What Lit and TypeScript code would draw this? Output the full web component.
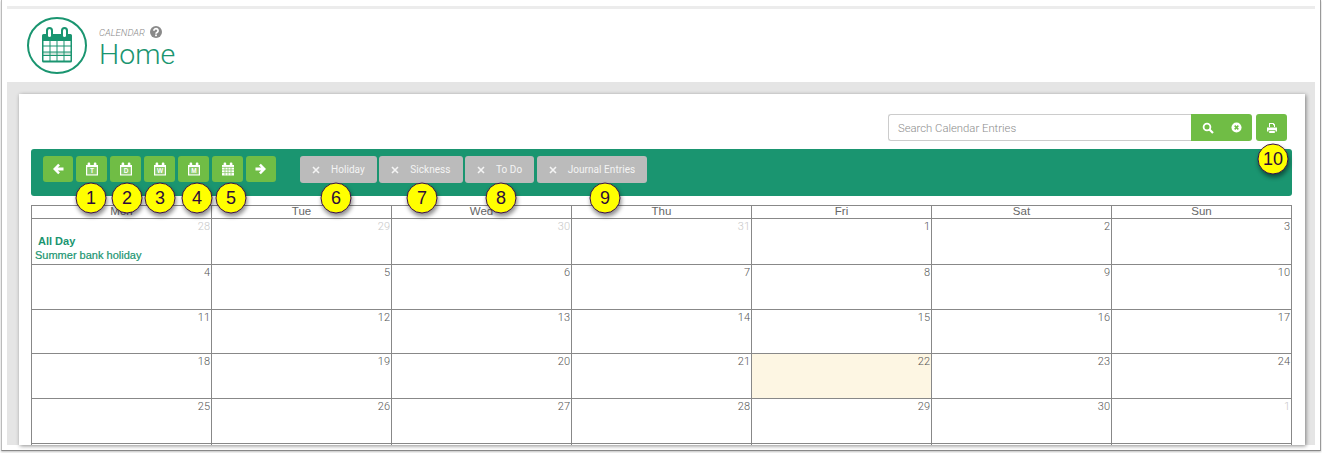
import { LitElement, html, css, svg } from "lit"
import { customElement } from "lit/decorators.js"

type Cell = { n: number; muted?: boolean; today?: boolean; events?: boolean }

const DAYS = ["Mon", "Tue", "Wed", "Thu", "Fri", "Sat", "Sun"]

const CELLS: Cell[] = [
  { n: 28, muted: true, events: true },
  { n: 29, muted: true },
  { n: 30, muted: true },
  { n: 31, muted: true },
  ...Array.from({ length: 30 }, (_, i) => ({ n: i + 1, today: i + 1 === 22 })),
  { n: 1, muted: true },
]

const CALLOUTS = [
  { label: "1", x: 91, y: 198 },
  { label: "2", x: 127, y: 198 },
  { label: "3", x: 160, y: 198 },
  { label: "4", x: 197, y: 198 },
  { label: "5", x: 231, y: 198 },
  { label: "6", x: 336, y: 198 },
  { label: "7", x: 422, y: 198 },
  { label: "8", x: 501, y: 198 },
  { label: "9", x: 605, y: 198 },
  { label: "10", x: 1273, y: 159 },
]

const FILTERS = ["Holiday", "Sickness", "To Do", "Journal Entries"]

// logo calendar cells: 4 columns, 4 rows, third row is tinted
const LOGO_ROWS = [
  { y: 24, h: 4.5, fill: "#fff" },
  { y: 29.5, h: 5, fill: "#fff" },
  { y: 35.5, h: 2.5, fill: "#cfe3da" },
  { y: 39, h: 4.5, fill: "#fff" },
]
const LOGO_COLS = [16.5, 23.5, 30.5, 37.5]

// small calendar glyph used on the toolbar buttons
const calIcon = (letter: string) => html`
  <svg class="cal" viewBox="0 0 14 14" width="14" height="14">
    <path
      fill="#fff"
      d="M1 3h1.6V1.6a1 1 0 0 1 1-1h.6a1 1 0 0 1 1 1V3h3.6V1.6a1 1 0 0 1 1-1h.6a1 1 0 0 1 1 1V3H13v10.5H1z"
    />
    ${letter
      ? svg`<rect x="2.2" y="5" width="9.6" height="7.4" fill="#8bc96a" />
          <text x="7" y="11.2" text-anchor="middle" font-size="6.5" font-weight="700" font-family="Liberation Sans, sans-serif" fill="#fff">${letter}</text>`
      : svg`<path stroke="#8bc96a" stroke-width=".8" d="M1 5.4h12M1 7.900h12M1 10.600h12M4 5v8.500M7 5v8.500M10 5v8.500" />`}
  </svg>
`

const arrow = (flip: boolean) => html`
  <svg class=${flip ? "flip" : ""} viewBox="0 0 12 12" width="12" height="12">
    <path fill="#fff" d="M6.200.8 8 2.600 5.800 4.600H11.500V7.400H5.800L8 9.400 6.200 11.200 1 6z" />
  </svg>
`

@customElement("app-root")
export class AppRoot extends LitElement {
  static styles = css`
    :host {
      display: block;
      width: 1322px;
      height: 453px;
      overflow: hidden;
      position: relative;
      background: #fff;
      font-family: "Liberation Sans", Arial, sans-serif;
    }

    .frame {
      box-sizing: border-box;
      width: 1320px;
      height: 451px;
      margin-left: 1px;
      border-left: 1px solid #bbb;
      border-right: 1px solid #999;
      border-bottom: 1px solid #888;
      box-shadow: 0 1px 2px rgba(0, 0, 0, 0.25);
      padding: 6px 5px 5px 5px;
      display: flex;
      flex-direction: column;
      overflow: hidden;
    }

    .topline {
      height: 3px;
      background: #ececec;
      flex: none;
    }

    .head {
      height: 73px;
      flex: none;
      display: flex;
      align-items: flex-start;
      padding: 8px 0 0 20px;
      box-sizing: border-box;
      gap: 12px;
    }

    .logo {
      width: 60px;
      height: 58px;
      flex: none;
    }

    .titles {
      display: flex;
      flex-direction: column;
      padding-top: 9px;
    }

    .crumb {
      display: flex;
      align-items: center;
      gap: 5px;
      height: 12px;
      font: italic 300 9.5px Roboto, sans-serif;
      color: #8a8a8a;
    }

    h1 {
      margin: 0;
      font: 300 28.5px/34px Roboto, sans-serif;
      color: #1a9570;
    }

    .panel {
      flex: 1;
      min-height: 0;
      background: #e5e5e5;
      padding: 12px 10px 0 12px;
      display: flex;
    }

    .card {
      flex: 1;
      background: #fff;
      box-shadow: 1px 1px 4px rgba(0, 0, 0, 0.45);
      padding: 20px 13px 0 12px;
      overflow: hidden;
    }

    .search-row {
      display: flex;
      justify-content: flex-end;
      height: 27px;
      padding-right: 5px;
    }

    .search {
      box-sizing: border-box;
      width: 303px;
      border: 1px solid #ccc;
      border-right: none;
      border-radius: 3px 0 0 3px;
      padding: 0 9px;
      font: 300 11.3px/27px Roboto, sans-serif;
      color: #8c8c8c;
    }

    .search-btns {
      display: flex;
      width: 61px;
      background: #70bd45;
      border-radius: 0 3px 3px 0;
      align-items: center;
      justify-content: space-around;
      padding: 0 2px;
      box-sizing: border-box;
    }

    .print {
      width: 31px;
      margin-left: 4px;
      background: #70bd45;
      border-radius: 3px;
      display: flex;
      align-items: center;
      justify-content: center;
    }

    .toolbar {
      margin-top: 8px;
      height: 47px;
      box-sizing: border-box;
      background: #1a9570;
      border-radius: 3px;
      padding: 7px 12px;
      display: flex;
      align-items: flex-start;
    }

    .nav {
      display: flex;
      gap: 3px;
    }

    .filters {
      display: flex;
      gap: 2.5px;
      margin-left: 24px;
    }

    .btn {
      width: 31px;
      height: 26px;
      background: #70bd45;
      border-radius: 3px;
      display: flex;
      align-items: center;
      justify-content: center;
    }

    .btn.end {
      width: 30px;
    }

    .flip {
      transform: scaleX(-1);
    }

    .chip {
      height: 27px;
      background: #bbb;
      border-radius: 3px;
      box-sizing: border-box;
      padding: 0 12px;
      display: flex;
      align-items: center;
      gap: 11px;
      font: 400 10px Roboto, sans-serif;
      letter-spacing: 0.05px;
      color: #f4f4f4;
    }

    .grid {
      margin-top: 9px;
      display: grid;
      grid-template-columns: repeat(7, 180px);
      grid-template-rows: 14px 46px 45px 44px 45px 45px 20px;
      border-left: 1px solid #888;
      width: 1261px;
      box-sizing: border-box;
    }

    .dow {
      border-top: 1px solid #888;
      border-right: 1px solid #888;
      border-bottom: 1px solid #888;
      box-sizing: border-box;
      font-size: 11.5px;
      line-height: 11px;
      text-align: center;
      color: #666;
    }

    .cell {
      border-right: 1px solid #888;
      border-bottom: 1px solid #888;
      box-sizing: border-box;
      padding: 1px 1px 0 3px;
      font: 300 11px/13px Roboto, sans-serif;
      color: #555;
      text-align: right;
    }

    .cell.muted {
      color: #c8c8c8;
    }

    .cell.today {
      background: #fdf6e3;
    }

    .allday {
      text-align: left;
      font: 700 11px/13px "Liberation Sans", sans-serif;
      color: #1a9570;
      padding: 2px 0 0 3px;
    }

    .event {
      text-align: left;
      font: 400 11px/13px "Liberation Sans", sans-serif;
      color: #1a9570;
      -webkit-text-stroke: 0.2px #1a9570;
      padding-top: 1px;
    }

    .tail {
      border-right: 1px solid #888;
    }

    .callout {
      position: absolute;
      width: 29px;
      height: 29px;
      box-sizing: content-box;
      border: 1.5px solid #3a0f4a;
      border-radius: 50%;
      background: #ffff00;
      box-shadow: 1px 3px 4px rgba(0, 0, 0, 0.45);
      display: flex;
      align-items: center;
      justify-content: center;
      font: 400 18px "Liberation Sans", sans-serif;
      color: #2c0a3a;
      transform: translate(-50%, -50%);
    }
  `

  renderHeader() {
    return html`
      <div class="head">
        <svg class="logo" viewBox="0 0 60 58">
          <ellipse cx="30" cy="28.5" rx="29" ry="27.5" fill="none" stroke="#1a9570" stroke-width="2" />
          <path
            fill="#1a9570"
            d="M15 18.500a1.500 1.500 0 0 1 1.500-1.500h2.500v-3.500a3.500 3.500 0 0 1 7 0V17h8v-3.500a3.500 3.500 0 0 1 7 0V17h2.500a1.500 1.500 0 0 1 1.500 1.500V44a1.500 1.500 0 0 1-1.500 1.500h-27A1.500 1.500 0 0 1 15 44z"
          />
          <rect x="21" y="12" width="3" height="8" rx="1.500" fill="#fff" />
          <rect x="36" y="12" width="3" height="8" rx="1.500" fill="#fff" />
          ${LOGO_ROWS.map((r) =>
            LOGO_COLS.map(
              (x) => svg`<rect x=${x} y=${r.y} width="6" height=${r.h} fill=${r.fill} />`
            )
          )}
        </svg>
        <div class="titles">
          <div class="crumb">
            CALENDAR
            <svg viewBox="0 0 12 12" width="12" height="12">
              <circle cx="6" cy="6" r="6" fill="#8a8a8a" />
              <path
                fill="none"
                stroke="#fff"
                stroke-width="1.700"
                d="M3.900 4.700a2.100 2 0 1 1 3.300 1.600c-.8.500-1.200.9-1.200 1.500"
              />
              <rect x="5.100" y="8.500" width="1.800" height="1.700" fill="#fff" />
            </svg>
          </div>
          <h1>Home</h1>
        </div>
      </div>
    `
  }

  renderSearch() {
    return html`
      <div class="search-row">
        <div class="search">Search Calendar Entries</div>
        <div class="search-btns">
          <svg viewBox="0 0 12 12" width="12" height="12">
            <circle cx="5" cy="5" r="3.400" fill="none" stroke="#fff" stroke-width="1.800" />
            <path stroke="#fff" stroke-width="2.200" d="M7.500 7.500 11 11" />
          </svg>
          <svg viewBox="0 0 12 12" width="11" height="11">
            <circle cx="6" cy="6" r="5.500" fill="#fff" />
            <path stroke="#70bd45" stroke-width="1.700" d="M4 4l4 4M8 4l-4 4" />
          </svg>
        </div>
        <div class="print">
          <svg viewBox="0 0 12 12" width="12" height="12">
            <path
              fill="#fff"
              d="M3 1h4.500L9 2.500V5H8V3.200H7V2H4v3H3zM1 5.500h10V9.500H9.500V8h-7v1.500H1zM3.200 8.700h5.600V11H3.200z"
            />
          </svg>
        </div>
      </div>
    `
  }

  renderToolbar() {
    return html`
      <div class="toolbar">
        <div class="nav">
          <div class="btn end">${arrow(false)}</div>
          ${["T", "D", "W", "M", ""].map((l) => html`<div class="btn">${calIcon(l)}</div>`)}
          <div class="btn end">${arrow(true)}</div>
        </div>
        <div class="filters">
          ${FILTERS.map(
            (f) => html`
              <div class="chip">
                <svg viewBox="0 0 8 8" width="8" height="8">
                  <path stroke="#f4f4f4" stroke-width="1.600" d="M1 1l6 6M7 1l-6 6" />
                </svg>
                ${f}
              </div>
            `
          )}
        </div>
      </div>
    `
  }

  renderGrid() {
    return html`
      <div class="grid">
        ${DAYS.map((d) => html`<div class="dow">${d}</div>`)}
        ${CELLS.map(
          (c) => html`
            <div class="cell ${c.muted ? "muted" : ""} ${c.today ? "today" : ""}">
              ${c.n}
              ${c.events
                ? html`<div class="allday">All Day</div>
                    <div class="event">Summer bank holiday</div>`
                : ""}
            </div>
          `
        )}
        ${DAYS.map(() => html`<div class="tail"></div>`)}
      </div>
    `
  }

  render() {
    return html`
      <div class="frame">
        <div class="topline"></div>
        ${this.renderHeader()}
        <div class="panel">
          <div class="card">
            ${this.renderSearch()} ${this.renderToolbar()} ${this.renderGrid()}
          </div>
        </div>
      </div>
      ${CALLOUTS.map(
        (c) => html`<div class="callout" style="left:${c.x}px;top:${c.y}px">${c.label}</div>`
      )}
    `
  }
}
